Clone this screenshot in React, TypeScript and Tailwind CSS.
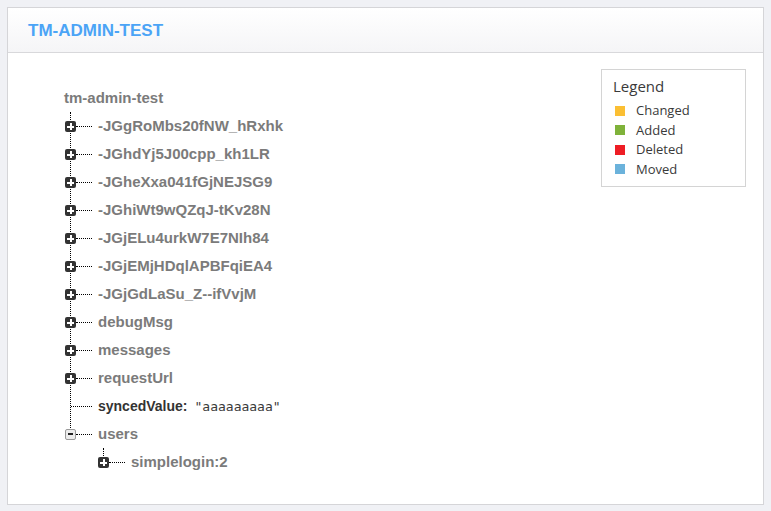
import React from 'react';

type Node = { key: string; open?: boolean; value?: string; children?: Node[] };

const nodes: Node[] = [
  { key: '-JGgRoMbs20fNW_hRxhk' },
  { key: '-JGhdYj5J00cpp_kh1LR' },
  { key: '-JGheXxa041fGjNEJSG9' },
  { key: '-JGhiWt9wQZqJ-tKv28N' },
  { key: '-JGjELu4urkW7E7NIh84' },
  { key: '-JGjEMjHDqlAPBFqiEA4' },
  { key: '-JGjGdLaSu_Z--ifVvjM' },
  { key: 'debugMsg' },
  { key: 'messages' },
  { key: 'requestUrl' },
  { key: 'syncedValue', value: '"aaaaaaaaa"' },
  { key: 'users', open: true, children: [{ key: 'simplelogin:2' }] },
];

const legend = [
  { label: 'Changed', color: 'bg-[#fbbf33]' },
  { label: 'Added', color: 'bg-[#7fb23a]' },
  { label: 'Deleted', color: 'bg-[#ee1d25]' },
  { label: 'Moved', color: 'bg-[#6bb2db]' },
];

const ToggleBox: React.FC<{ open?: boolean }> = ({ open }) =>
  open ? (
    <div className="relative z-10 w-[11px] h-[11px] flex-shrink-0 rounded-[2px] border border-[#9a9a9a] bg-[#ececec] flex items-center justify-center">
      <div className="w-[5px] h-[2px] bg-[#222]"></div>
    </div>
  ) : (
    <div className="relative z-10 w-[11px] h-[11px] flex-shrink-0 rounded-[2px] bg-[#333] flex items-center justify-center">
      <svg width="7" height="7" viewBox="0 0 7 7" shapeRendering="crispEdges">
        <rect x="0" y="2.5" width="7" height="2" fill="#fff" />
        <rect x="2.5" y="0" width="2" height="7" fill="#fff" />
      </svg>
    </div>
  );

const TreeRow: React.FC<{ node: Node }> = ({ node }) => (
  <div>
    <div className="flex items-center h-[28px]">
      {node.value !== undefined ? (
        <div className="ml-[6px] w-[21px] border-t border-dotted border-black"></div>
      ) : (
        <>
          <ToggleBox open={node.open} />
          <div className="w-[16px] border-t border-dotted border-black"></div>
        </>
      )}
      {node.value !== undefined ? (
        <span className="ml-[6px] flex items-baseline">
          <span className="text-[14px] font-bold text-[#333]">{node.key}:</span>
          <span className="ml-[7px] text-[13px] text-[#3a3a3a] font-['DejaVu_Sans_Mono',monospace]">
            {node.value}
          </span>
        </span>
      ) : (
        <span className="ml-[6px] text-[15px] font-bold text-[#7b7b7b]">{node.key}</span>
      )}
    </div>
    {node.open && node.children && (
      <div className="relative ml-[33px]">
        <div className="absolute left-[5px] top-0 h-[14px] border-l border-dotted border-black"></div>
        {node.children.map((c) => (
          <TreeRow key={c.key} node={c} />
        ))}
      </div>
    )}
  </div>
);

export default function App() {
  return (
    <div className="w-[771px] h-[511px] bg-[#f0f1f5] pt-[7px] px-[7px] pb-[6px] font-['Liberation_Sans',Arial,sans-serif]">
      <div className="h-full border border-[#d5d5d8] bg-white flex flex-col">
        <div className="h-[45px] flex-shrink-0 border-b border-[#d8d8db] bg-gradient-to-b from-white to-[#f5f5f7] flex items-center px-[20px]">
          <h1 className="text-[17px] font-bold text-[#4ba4f6] leading-none pt-[1px]">TM-ADMIN-TEST</h1>
        </div>
        <div className="flex-1 flex justify-between">
          <div className="pl-[56px] pt-[31px]">
            <div className="flex items-center h-[28px]">
              <span className="text-[15px] font-bold text-[#7b7b7b]">tm-admin-test</span>
            </div>
            <div className="relative ml-[1px]">
              <div className="absolute left-[5px] top-0 h-[322px] border-l border-dotted border-black"></div>
              {nodes.map((n) => (
                <TreeRow key={n.key} node={n} />
              ))}
            </div>
          </div>
          <div className="mt-[16px] mr-[17px] self-start w-[145px] border border-[#d4d4d4] pl-[11px] pt-[6px] pb-[7px] font-['Open_Sans',sans-serif] text-[#3a3a3a]">
            <div className="text-[15px] leading-[21px]">Legend</div>
            <div className="mt-[4px]">
              {legend.map((l) => (
                <div key={l.label} className="flex items-center h-[19.5px]">
                  <div className={`w-[10px] h-[10px] ml-[2px] ${l.color}`}></div>
                  <span className="ml-[11px] text-[13px]">{l.label}</span>
                </div>
              ))}
            </div>
          </div>
        </div>
      </div>
    </div>
  );
}
